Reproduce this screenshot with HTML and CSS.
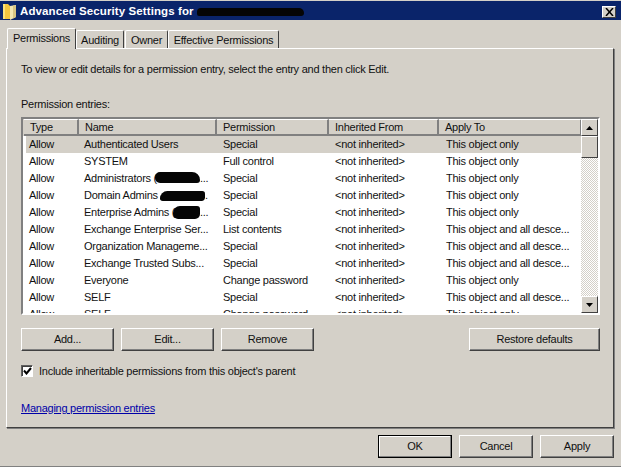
FILE: index.html
```html
<!DOCTYPE html>
<html lang="en">
<head>
<meta charset="utf-8">
<title>Advanced Security Settings</title>
<link rel="stylesheet" href="styles.css">
</head>
<body>
<div class="window">
  <div class="titlebar">
    <svg class="folder" width="15" height="17" viewBox="0 0 15 17"><path d="M1 1h5l2 2v13H1z" fill="#f4c63f"/><path d="M1 1h2v15H1z" fill="#fbe27a"/><path d="M8 3l6-1v12l-6 3z" fill="#f3e6b0"/><path d="M11 2.500h3V14l-3 1.500z" fill="#d8c583"/></svg>
    <span class="title">Advanced Security Settings for</span>
    <span class="blob blob-title"></span>
    <span class="close"><svg width="9" height="8" viewBox="0 0 9 8"><path d="M1 0l7 8M8 0L1 8" stroke="#000" stroke-width="1.500" fill="none"/></svg></span>
  </div>
  <div class="tabs">
    <span class="tab active">Permissions</span>
    <span class="tab t-aud">Auditing</span>
    <span class="tab t-own">Owner</span>
    <span class="tab t-eff">Effective Permissions</span>
  </div>
  <div class="panel">
    <p class="intro">To view or edit details for a permission entry, select the entry and then click Edit.</p>
    <p class="entries">Permission entries:</p>
    <div class="list">
      <div class="list-body">
        <div class="row head"><span>Type</span><span>Name</span><span>Permission</span><span>Inherited From</span><span>Apply To</span></div>
        <div class="rows">
          <div class="row sel"><span>Allow</span><span>Authenticated Users</span><span>Special</span><span>&lt;not inherited&gt;</span><span>This object only</span></div>
          <div class="row"><span>Allow</span><span>SYSTEM</span><span>Full control</span><span>&lt;not inherited&gt;</span><span>This object only</span></div>
          <div class="row"><span>Allow</span><span>Administrators (<i class="blob blob-a"></i><b class="dots d-a">...</b></span><span>Special</span><span>&lt;not inherited&gt;</span><span>This object only</span></div>
          <div class="row"><span>Allow</span><span>Domain Admins <i class="blob blob-d"></i><b class="dots d-d">.</b></span><span>Special</span><span>&lt;not inherited&gt;</span><span>This object only</span></div>
          <div class="row"><span>Allow</span><span>Enterprise Admins (<i class="blob blob-e"></i><b class="dots d-e">...</b></span><span>Special</span><span>&lt;not inherited&gt;</span><span>This object only</span></div>
          <div class="row"><span>Allow</span><span>Exchange Enterprise Ser...</span><span>List contents</span><span>&lt;not inherited&gt;</span><span>This object and all desce...</span></div>
          <div class="row"><span>Allow</span><span>Organization Manageme...</span><span>Special</span><span>&lt;not inherited&gt;</span><span>This object and all desce...</span></div>
          <div class="row"><span>Allow</span><span>Exchange Trusted Subs...</span><span>Special</span><span>&lt;not inherited&gt;</span><span>This object and all desce...</span></div>
          <div class="row"><span>Allow</span><span>Everyone</span><span>Change password</span><span>&lt;not inherited&gt;</span><span>This object only</span></div>
          <div class="row"><span>Allow</span><span>SELF</span><span>Special</span><span>&lt;not inherited&gt;</span><span>This object and all desce...</span></div>
          <div class="row"><span>Allow</span><span>SELF</span><span>Change password</span><span>&lt;not inherited&gt;</span><span>This object only</span></div>
        </div>
      </div>
      <div class="scrollbar">
        <span class="sb-btn"><svg width="7" height="4" viewBox="0 0 7 4"><path d="M3.500 0L7 4H0z"/></svg></span>
        <span class="sb-btn thumb"></span>
        <span class="track"></span>
        <span class="sb-btn"><svg width="7" height="4" viewBox="0 0 7 4"><path d="M0 0h7L3.500 4z"/></svg></span>
      </div>
    </div>
    <div class="actions">
      <button class="btn b-add">Add...</button>
      <button class="btn b-edit">Edit...</button>
      <button class="btn b-rem">Remove</button>
      <button class="btn b-res">Restore defaults</button>
    </div>
    <div class="check">
      <span class="box"><svg width="9" height="8" viewBox="0 0 9 8"><path d="M1 3.500l2.500 3L8 1" stroke="#000" stroke-width="2" fill="none"/></svg></span>
      <span>Include inheritable permissions from this object's parent</span>
    </div>
    <a class="link" href="#">Managing permission entries</a>
  </div>
  <div class="footer">
    <button class="btn foot default">OK</button>
    <button class="btn foot">Cancel</button>
    <button class="btn foot">Apply</button>
  </div>
</div>
</body>
</html>
```
FILE: styles.css
```css
* { box-sizing: border-box; }
html, body { margin: 0; padding: 0; }
body {
  width: 621px;
  height: 467px;
  overflow: hidden;
  background: #d4d0c8;
  color: #111;
  font: 11px/14px "Liberation Sans", Arial, sans-serif;
  letter-spacing: -.25px;
}
.window {
  height: 467px;
  padding-top: 1px;
  border-bottom: 1px solid #808080;
  display: flex;
  flex-direction: column;
}
.titlebar {
  height: 19px;
  background: #0a246a;
  display: flex;
  align-items: center;
  padding: 0 5px 0 2px;
  color: #fff;
  position: relative;
}
.folder { flex: none; margin: 2px 3px 0 0; }
.title { font-weight: 700; font-size: 11.500px; letter-spacing: .1px; }
.close {
  margin-left: auto;
  width: 14px;
  height: 12px;
  margin-top: 2px;
  background: #d4d0c8;
  border: 1px solid;
  border-color: #fff #404040 #404040 #fff;
  display: flex;
  align-items: center;
  justify-content: center;
}
.blob { position: absolute; background: #050505; display: block; }
.blob-title { left: 197px; top: 7px; width: 107px; height: 8px; border-radius: 4px 5px 3px 2px; }
.tabs {
  display: flex;
  align-items: flex-end;
  height: 28px;
  padding-left: 7px;
  position: relative;
  z-index: 1;
  white-space: nowrap;
}
.tab {
  height: 18px;
  padding-top: 2px;
  text-align: center;
  border: 1px solid;
  border-bottom: 0;
  border-color: #fff #404040 #fff #fff;
  border-radius: 2px 2px 0 0;
  background: #d4d0c8;
}
.tab.active { width: 69px; height: 21px; margin-bottom: -1px; padding-top: 2px; }
.t-aud { width: 48px; }
.t-own { width: 43px; margin-left: 1px; }
.t-eff { width: 111px; }
.panel {
  margin: 0 7px 0 6px;
  height: 380px;
  border: 1px solid;
  border-color: #fff #404040 #404040 #fff;
  box-shadow: 1px 1px 0 #808080;
  padding: 13px 14px 0 14px;
  display: flex;
  flex-direction: column;
}
.intro { margin: 0; }
.entries { margin: 21px 0 0; }
.list {
  margin-top: 6px;
  width: 579px;
  height: 198px;
  background: #fff;
  border: 2px solid;
  border-color: #808080 #fff #fff #808080;
  display: flex;
  overflow: hidden;
}
.list-body { width: 558px; overflow: hidden; }
.rows { height: 177px; overflow: hidden; padding-left: 3px; }
.row {
  display: grid;
  grid-template-columns: 54px 138px 112px 110px 143px;
  height: 17px;
  line-height: 16px;
  white-space: nowrap;
}
.row > span { padding-left: 3px; position: relative; }
.rows .row > span:nth-child(2) { padding-left: 4px; }
.rows .row > span:nth-child(3) { padding-left: 5px; }
.rows .row > span:nth-child(4) { padding-left: 5px; }
.rows .row > span:nth-child(5) { padding-left: 6px; }
.sel { background: #d4d0c8; }
.head {
  background: #d4d0c8;
  height: 17px;
  grid-template-columns: 55px 138px 112px 110px 143px;
  padding-left: 1px;
}
.head > span {
  padding-left: 6px;
  border-right: 2px solid #808080;
  border-bottom: 2px solid #808080;
  border-top: 1px solid #fff;
  line-height: 14px;
}
.dots { position: absolute; font-weight: 400; }
i.blob { z-index: 1; }
.blob-a { left: 75px; top: 2px; width: 45px; height: 11px; border-radius: 5px 8px 3px 5px; }
.d-a { left: 120px; top: 0; }
.blob-d { left: 80px; top: 4px; width: 45px; height: 10px; border-radius: 8px 3px 4px 3px; }
.d-d { left: 125px; top: 0; }
.blob-e { left: 93px; top: 2px; width: 27px; height: 13px; border-radius: 7px 3px 5px 5px; }
.d-e { left: 120px; top: 0; }
.scrollbar {
  width: 17px;
  flex: none;
  display: flex;
  flex-direction: column;
}
.sb-btn {
  height: 17px;
  flex: none;
  background: #d4d0c8;
  border: 1px solid;
  border-color: #fff #404040 #404040 #fff;
  display: flex;
  align-items: center;
  justify-content: center;
}
.thumb { height: 22px; }
.track {
  flex: 1;
  background: repeating-conic-gradient(#d4d0c8 0 25%, #fff 0 50%) 0 0 / 2px 2px;
}
.actions { display: flex; margin-top: 13px; width: 579px; }
.btn {
  height: 23px;
  padding: 0 0 2px;
  font: inherit;
  letter-spacing: inherit;
  color: inherit;
  background: #d4d0c8;
  border: 1px solid;
  border-color: #fff #404040 #404040 #fff;
  box-shadow: inset -1px -1px 0 #808080;
}
.b-add { width: 93px; }
.b-edit { width: 93px; margin-left: 7px; }
.b-rem { width: 93px; margin-left: 7px; }
.b-res { width: 131px; margin-left: auto; }
.check {
  display: flex;
  align-items: center;
  gap: 6px;
  margin-top: 13px;
  height: 14px;
}
.box {
  width: 12px;
  height: 12px;
  background: #fff;
  border: 1px solid;
  border-color: #606060 #fff #fff #606060;
  box-shadow: inset 1px 1px 0 #404040;
  display: flex;
  align-items: center;
  justify-content: center;
}
.link {
  margin-top: 23px;
  color: #0000a8;
  width: max-content;
}
.footer {
  display: flex;
  justify-content: flex-end;
  gap: 7px;
  padding: 7px 7px 0 0;
}
.foot { width: 74px; }
.default { border: 1px solid #000; box-shadow: inset -1px -1px 0 #808080, inset 1px 1px 0 #fff; }
```
